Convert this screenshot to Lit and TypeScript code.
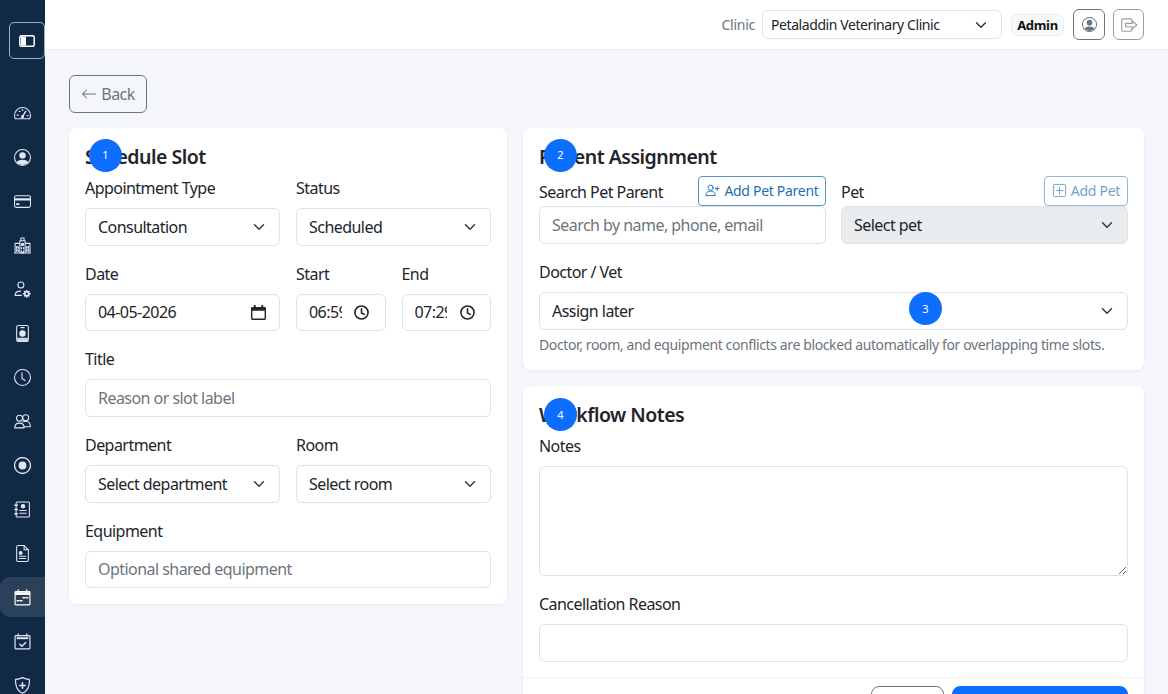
import { LitElement, html, css, svg } from "lit";
import { customElement } from "lit/decorators.js";

const s = (body: unknown) => html`<svg class="ic" viewBox="0 0 16 16" fill="none" stroke="currentColor" stroke-width="1" stroke-linecap="round" stroke-linejoin="round">${body}</svg>`;

const personCircle = svg`<path fill="currentColor" stroke="none" d="M11 6a3 3 0 1 1-6 0 3 3 0 0 1 6 0"/><path fill="currentColor" stroke="none" d="M2.532 12.370C3.242 11.226 4.805 10 8 10s4.757 1.225 5.468 2.370A7 7 0 0 1 8 15a7 7 0 0 1-5.468-2.630"/><path fill="currentColor" stroke="none" fill-rule="evenodd" d="M0 8a8 8 0 1 1 16 0A8 8 0 0 1 0 8m8-7a7 7 0 1 0 0 14A7 7 0 0 0 8 1"/>`;

const navIcons = [
  svg`<path d="M1.2 13h13.6a7.6 7.6 0 0 0 .7-3.2A7.5 7.5 0 0 0 .5 9.800a7.600 7.600 0 0 0 .7 3.200z"/><path stroke-width="1.300" d="M8 11l3-5M3 9.500h1M12.500 10h.6M5 6h.5M8 4.500v.5"/><circle cx="8" cy="11" r="1" fill="currentColor"/>`,
  personCircle,
  svg`<rect x=".5" y="2.500" width="15" height="11" rx="1.500"/><path stroke-width="2" d="M.8 6h14.400"/><path stroke-width="1.500" d="M2.500 10.500h2"/>`,
  svg`<path d="M5.500 15V3.500h5V15M5.500 6H1v9h14V6h-4.500M6.500 3.500V1h3v2.500M.5 15h15"/><circle cx="8" cy="7" r="1.200" fill="currentColor"/><path stroke-width="1.200" d="M2.500 9v1.500M4 9v1.500M2.500 12v1.500M4 12v1.500M12 9v1.500M13.500 9v1.500M12 12v1.500M13.500 12v1.500M7 10v1M9 10v1M7 13v2h2v-2"/>`,
  svg`<circle cx="6.500" cy="3.800" r="2.800"/><path d="M1 13.500c0-2.700 2-4 5.200-4M1 13.500h6"/><circle cx="12" cy="12" r="1.900" stroke-width="1.600"/><path stroke-width="1.300" d="M12 8.800v1M12 14.200v1M8.800 12h1M14.200 12h1M9.800 9.800l.6.600M13.600 13.600l.6.600M9.800 14.200l.6-.6M13.600 10.400l.6-.6"/>`,
  svg`<rect x="2.500" y=".5" width="11" height="15" rx="1.500"/><path stroke-width="1.200" d="M6.500 2.500h3"/><circle cx="8" cy="8" r="2.500" fill="currentColor"/><path fill="currentColor" stroke="none" d="M3 12h10v3.500H3z" opacity=".9"/>`,
  svg`<circle cx="8" cy="8" r="7.500" stroke-width="1"/><path d="M7.500 3.500V9l3 1.800"/>`,
  svg`<circle cx="5.200" cy="5" r="2.800"/><circle cx="11" cy="4.500" r="2.800"/><path d="M.7 14c0-3 2-4.500 4.500-4.500S9.500 11 9.500 14zM8.500 8.300c.8-.4 1.600-.5 2.500-.5 2.500 0 4.400 1.700 4.400 5.200h-5.500"/>`,
  svg`<circle cx="8" cy="8" r="7.500" stroke-width="1.200"/><circle cx="8" cy="8" r="3.200" fill="currentColor"/>`,
  svg`<path d="M3 1h10.500a1 1 0 0 1 1 1v12a1 1 0 0 1-1 1H3a1 1 0 0 1-1-1V2a1 1 0 0 1 1-1z"/><circle cx="8.500" cy="5" r="1.600" fill="currentColor"/><path d="M5.500 9h6M5.500 11.500h6"/><path stroke-width="1.300" d="M.8 4h2.400M.8 8h2.400M.8 12h2.400"/>`,
  svg`<path d="M9.500.5H4A1.500 1.500 0 0 0 2.500 2v12A1.500 1.500 0 0 0 4 15.500h8a1.500 1.500 0 0 0 1.500-1.500V4.500z"/><path d="M9.500.5v4h4"/><circle cx="6.300" cy="7.500" r="1.300" fill="currentColor"/><path d="M5 10.500h6M5 12.700h6"/>`,
  svg`<rect x="1" y="2.500" width="14" height="12.500" rx=".8" stroke-width="1.100"/><path stroke-width="1.100" d="M4 .8v2M12 .8v2"/><path fill="currentColor" stroke="none" d="M1 3h14v2.600H1z"/><path stroke-width="1.500" d="M8.500 8.200h1.500M11.500 8.200h1.500M3 11h1.500M6 11h1.500"/>`,
  svg`<rect x="1" y="2.500" width="14" height="12.500" rx=".8" stroke-width="1.100"/><path stroke-width="1.100" d="M4 .8v2M12 .8v2"/><path fill="currentColor" stroke="none" d="M2.500 4h11v1.800h-11z"/><path stroke-width="1.400" d="M5.500 10.500l2 2 3.500-3.500"/>`,
  svg`<path stroke-width="1.100" d="M8 .6c2 1 4.200 1.600 6.500 1.700.3 5.500-1.500 10.800-6.500 13-5-2.200-6.800-7.500-6.500-13C3.800 2.200 6 1.600 8 .6z"/><path stroke-width="1.500" d="M8 5.500v5M5.500 8h5"/>`,
];

const calendar = svg`<path fill="currentColor" stroke="none" d="M3 0h2v2h6V0h2v2h1.500A1.500 1.500 0 0 1 16 3.500v11a1.500 1.500 0 0 1-1.500 1.500h-13A1.500 1.500 0 0 1 0 14.500v-11A1.500 1.500 0 0 1 1.500 2H3zM1.500 6v8.500h13V6z"/>`;
const clock = svg`<circle cx="8" cy="8" r="7" stroke-width="1.700"/><path stroke-width="1.700" d="M8 4v4.500l3 1.500"/>`;

@customElement("app-root")
export class AppRoot extends LitElement {
  static styles = css`
    :host { display: block; height: 100vh; overflow: hidden; font-family: "Noto Sans", "Open Sans", sans-serif; font-size: 16px; line-height: 24px; color: #212529; letter-spacing: -0.54px; }
    * { box-sizing: border-box; }
    .app { display: flex; height: 694px; overflow: hidden; }
    .side { flex: 0 0 45px; background: #102a46; color: #e3e6f6; display: flex; flex-direction: column; align-items: flex-end; padding-top: 22px; }
    .toggle { width: 36px; height: 37px; margin-bottom: 32px; flex: none; border: 1px solid #9fb0bf; border-radius: 5px; display: flex; align-items: center; justify-content: center; color: #fff; }
    .toggle svg { width: 16px; height: 16px; display: block; }
    .nav { width: 45px; height: 40px; margin: 2px 0; flex: none; display: flex; align-items: center; justify-content: center; border-radius: 10px 0 0 10px; }
    .nav.active { background: #2a4159; color: #fff; }
    .ic { width: 17px; height: 17px; display: block; flex: none; }
    .body { flex: 1; min-width: 0; display: flex; flex-direction: column; background: #f4f6fb; }
    .top { height: 50px; flex: none; background: #fff; border-bottom: 1px solid #eef0f3; display: flex; align-items: center; justify-content: flex-end; padding: 0 24px 0 0; font-size: 14px; }
    .clinic-lbl { color: #6c757d; margin-right: 7px; letter-spacing: -0.25px; }
    select.ctl.clinic { width: 240px; height: 29px; padding: 0 34px 0 8px; font-size: 14px; margin-right: 9px; letter-spacing: -0.42px; }
    .role { width: 53px; height: 22px; border: 1px solid #eceef1; background: #f8f9fa; border-radius: 6px; font-size: 13px; font-weight: 700; display: flex; align-items: center; justify-content: center; color: #111; margin-right: 9px; letter-spacing: -0.3px; }
    .tbtn { width: 32px; height: 31px; border: 1px solid #6c757d; border-radius: 6px; background: transparent; display: flex; align-items: center; justify-content: center; color: #6c757d; padding: 0; }
    .tbtn svg { width: 15px; height: 15px; display: block; }
    .tbtn.off { width: 31px; opacity: .7; margin-left: 8px; }
    .tbtn.off svg { width: 18px; height: 18px; }
    .main { flex: 1; min-height: 0; padding: 25px 24px 0; display: flex; flex-direction: column; gap: 15.330px; }
    .back { flex: none; align-self: flex-start; width: 78px; height: 37.670px; border: 1px solid #6c757d; border-radius: 6px; color: #6c757d; background: transparent; font: inherit; letter-spacing: inherit; display: flex; align-items: center; justify-content: center; gap: 4px; padding: 0; }
    .back svg { width: 16px; height: 16px; }
    .cols { display: flex; gap: 16px; align-items: flex-start; }
    .left { flex: 0 0 438px; }
    .right { flex: 1; min-width: 0; display: flex; flex-direction: column; gap: 16px; }
    .card { position: relative; background: #fff; border-radius: 8px; padding: 16px; box-shadow: 0 1px 3px rgba(20,30,60,.06); }
    h2 { margin: 0 0 6px; font-size: 19.500px; line-height: 26px; font-weight: 600; letter-spacing: -0.5px; }
    .stack { display: flex; flex-direction: column; gap: 16px; }
    .two { display: grid; grid-template-columns: 1fr 1fr; gap: 16px; }
    label { display: block; margin-bottom: 8px; height: 24px; line-height: 25.200px; }
    .ctl { display: block; width: 100%; height: 37.670px; border: 1px solid #dee2e6; border-radius: 6px; background-color: #fff; font: inherit; letter-spacing: inherit; color: #212529; padding: 0 12px; outline: none; }
    .ctl::placeholder { color: #6c757d; opacity: 1; }
    select.ctl { appearance: none; padding-right: 36px; background-image: url("data:image/svg+xml,%3csvg xmlns='http://www.w3.org/2000/svg' viewBox='0 0 16 16'%3e%3cpath fill='none' stroke='%23343a40' stroke-linecap='round' stroke-linejoin='round' stroke-width='2' d='m2 5 6 6 6-6'/%3e%3c/svg%3e"); background-repeat: no-repeat; background-position: right 12px center; background-size: 16px 12px; }
    .pick { position: relative; }
    .pick .ic { position: absolute; right: 14.500px; top: 11px; width: 15px; height: 15px; color: #212529; }
    .pick .ctl.time { padding-right: 43px; }
    .pick .ctl.time + .ic { right: 16.500px; }
    .head-row { display: flex; align-items: flex-end; justify-content: space-between; height: 30.500px; }
    .head-row span { line-height: 24px; margin-bottom: 2.500px; }
    .sm { height: 30px; border: 1px solid #5b93c4; border-radius: 4px; background: #fff; color: #1e6fb5; font: inherit; font-size: 14px; letter-spacing: -0.3px; display: flex; align-items: center; gap: 4px; padding: 0 6.500px; margin-bottom: .5px; }
    .sm svg { width: 15px; height: 15px; display: block; }
    .sm.off { opacity: .65; padding: 0 7px; }
    .grey { background-color: #e9ecef; }
    .pair { display: grid; grid-template-columns: 287px 287px; justify-content: space-between; }
    .help { margin-top: 5px; font-size: 14px; line-height: 20px; color: #6c757d; letter-spacing: -0.38px; }
    .assign { padding-bottom: 15.500px; }
    textarea.ctl { height: 110px; resize: both; padding: 6px 12px; }
    .footer { border-top: 1px solid #eef0f3; margin: 15.500px -16px 0; padding: 8px 16px 0; display: flex; justify-content: flex-end; gap: 8px; }
    .btn { height: 38px; border-radius: 8px; font: inherit; letter-spacing: inherit; padding: 0; }
    .btn.cancel { width: 73px; background: #fff; border: 1px solid #6c757d; color: #6c757d; }
    .btn.save { width: 176px; background: #0d6efd; border: 1px solid #0d6efd; color: #fff; }
    .mark { position: absolute; width: 33px; height: 33px; border-radius: 50%; background: #0d6efd; color: #fff; font-size: 11px; display: flex; align-items: center; justify-content: center; letter-spacing: 0; z-index: 2; }
    .m1 { left: 20px; top: 11px; }
    .m2 { left: 21px; top: 11px; }
    .m3 { left: 386px; top: 164.500px; }
    .m4 { left: 21px; top: 12px; }
  `;

  render() {
    return html`<div class="app">
      <nav class="side">
        <div class="toggle"><svg viewBox="0 0 16 16" fill="none"><rect x=".8" y="2.800" width="14.400" height="10.400" rx="1.500" stroke="currentColor" stroke-width="1.500"/><rect x="2" y="3.500" width="5" height="9" fill="currentColor"/></svg></div>
        ${navIcons.map((d, i) => html`<div class="nav ${i === 11 ? "active" : ""}">${s(d)}</div>`)}
      </nav>
      <div class="body">
        <header class="top">
          <span class="clinic-lbl">Clinic</span>
          <select class="ctl clinic"><option>Petaladdin Veterinary Clinic</option></select>
          <span class="role">Admin</span>
          <button class="tbtn">${s(personCircle)}</button>
          <button class="tbtn off"><svg viewBox="0 0 16 16" fill="none" stroke="currentColor" stroke-linejoin="round" stroke-linecap="round"><path d="M10.500 5V3.500a1 1 0 0 0-1-1h-7a1 1 0 0 0-1 1v9a1 1 0 0 0 1 1h7a1 1 0 0 0 1-1V11"/><path d="M5 6.500h6V4.500L15 8l-4 3.500v-2H5z"/></svg></button>
        </header>
        <main class="main">
          <button class="back"><svg viewBox="0 0 16 16" fill="currentColor"><path fill-rule="evenodd" d="M15 8a.5.5 0 0 0-.5-.5H2.707l3.147-3.146a.5.5 0 1 0-.708-.708l-4 4a.5.5 0 0 0 0 .708l4 4a.5.5 0 0 0 .708-.708L2.707 8.500H14.500A.5.5 0 0 0 15 8"/></svg>Back</button>
          <div class="cols">
            <section class="card left">
              <span class="mark m1">1</span>
              <h2>Schedule Slot</h2>
              <div class="stack">
                <div class="two">
                  <div><label>Appointment Type</label><select class="ctl"><option>Consultation</option></select></div>
                  <div><label>Status</label><select class="ctl"><option>Scheduled</option></select></div>
                </div>
                <div class="two">
                  <div><label>Date</label><div class="pick"><input class="ctl" value="04-05-2026" />${s(calendar)}</div></div>
                  <div class="two">
                    <div><label>Start</label><div class="pick"><input class="ctl time" value="06:59" />${s(clock)}</div></div>
                    <div><label>End</label><div class="pick"><input class="ctl time" value="07:29" />${s(clock)}</div></div>
                  </div>
                </div>
                <div><label>Title</label><input class="ctl" placeholder="Reason or slot label" /></div>
                <div class="two">
                  <div><label>Department</label><select class="ctl"><option>Select department</option></select></div>
                  <div><label>Room</label><select class="ctl"><option>Select room</option></select></div>
                </div>
                <div><label>Equipment</label><input class="ctl" placeholder="Optional shared equipment" /></div>
              </div>
            </section>
            <div class="right">
              <section class="card assign">
                <span class="mark m2">2</span>
                <span class="mark m3">3</span>
                <h2>Patient Assignment</h2>
                <div class="stack">
                  <div class="pair">
                    <div>
                      <div class="head-row"><span>Search Pet Parent</span>
                        <button class="sm"><svg viewBox="0 0 16 16" fill="none" stroke="currentColor" stroke-linecap="round"><circle cx="6" cy="5" r="2.800"/><path d="M1 13c0-3 2-4.300 5-4.300s5 1.300 5 4.300zM13 4v4M11 6h4"/></svg>Add Pet Parent</button></div>
                      <input class="ctl" placeholder="Search by name, phone, email" />
                    </div>
                    <div>
                      <div class="head-row"><span>Pet</span>
                        <button class="sm off"><svg viewBox="0 0 16 16" fill="none" stroke="currentColor" stroke-linecap="round"><rect x="1.500" y="1.500" width="13" height="13" rx="1.500"/><path d="M8 4.500v7M4.500 8h7"/></svg>Add Pet</button></div>
                      <select class="ctl grey"><option>Select pet</option></select>
                    </div>
                  </div>
                  <div>
                    <label>Doctor / Vet</label>
                    <select class="ctl"><option>Assign later</option></select>
                    <div class="help">Doctor, room, and equipment conflicts are blocked automatically for overlapping time slots.</div>
                  </div>
                </div>
              </section>
              <section class="card">
                <span class="mark m4">4</span>
                <h2>Workflow Notes</h2>
                <div class="stack">
                  <div><label>Notes</label><textarea class="ctl"></textarea></div>
                  <div><label>Cancellation Reason</label><input class="ctl" /></div>
                </div>
                <div class="footer">
                  <button class="btn cancel">Cancel</button>
                  <button class="btn save">Save Appointment</button>
                </div>
              </section>
            </div>
          </div>
        </main>
      </div>
    </div>`;
  }
}
